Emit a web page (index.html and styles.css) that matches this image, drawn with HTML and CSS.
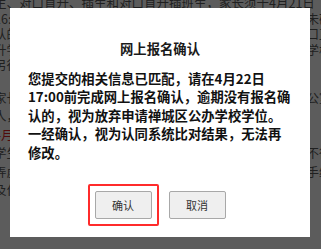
FILE: index.html
```html
<!DOCTYPE html>
<html lang="zh-CN">
<head>
<meta charset="utf-8">
<title>网上报名确认</title>
<link rel="stylesheet" href="styles.css">
</head>
<body>
<div class="page">
  <p class="p1">生、对口直升、插生和对口直升插班生，家长须于4月21日16:00-4月22日17:00前登录系统完成网上报名确认，逾期未确认的视为放弃报名回执。符合对口直升条件的学生，由对口直升学校统一安排入学的学位。对口直升学校的招生信息由学校另行公司拉取，请家长留意学校公布的相关项目。</p>
  <p class="p2">家长应认真核对信息，如有疑问请联系所属学校的招生办公室人，报名</p>
  <p class="p3"><span class="red">4月23日</span>前由学校公布审核结果。</p>
  <p class="p4">学生信息以系统比对结果为准，家长须按要求提交材料，不得弄虚作假，尚适用相关规定的学生，请按时到校办理入学手续及住宿、安排宿部相关事宜。</p>
</div>

<div class="overlay">
  <div class="modal">
    <h2 class="title">网上报名确认</h2>
    <p class="message">您提交的相关信息已匹配，请在4月22日17:00前完成网上报名确认，逾期没有报名确认的，视为放弃申请禅城区公办学校学位。一经确认，视为认同系统比对结果，无法再修改。</p>
    <div class="actions">
      <button class="btn btn-primary" type="button">确认</button>
      <button class="btn" type="button">取消</button>
    </div>
  </div>
</div>
</body>
</html>
```

FILE: styles.css
```css
html, body {
  margin: 0;
  padding: 0;
}

body {
  width: 321px;
  height: 249px;
  overflow: hidden;
  background: #ffffff;
  font-family: "Noto Sans CJK SC", "Microsoft YaHei", sans-serif;
}

.page {
  margin-left: -6px;
  margin-top: -5px;
  width: 340px;
  font-size: 12.5px;
  color: #5a5a5a;
}

.page p {
  margin: 0;
}

.p1 {
  line-height: 15.5px;
}

.p2 {
  margin-top: 16px !important;
  line-height: 18.5px;
}

.p3,
.p4 {
  line-height: 18.5px;
}

.red {
  color: #dd2222;
}

.overlay {
  position: fixed;
  inset: 0;
  background: rgba(0, 0, 0, 0.64);
}

.modal {
  position: absolute;
  left: 10px;
  top: 8px;
  width: 300px;
  height: 229px;
  box-sizing: border-box;
  padding: 32px 18px 0;
  background: #ffffff;
  display: flex;
  flex-direction: column;
}

.title {
  margin: 0;
  font-size: 13.33px;
  line-height: 18.6px;
  font-weight: bold;
  text-align: center;
  color: #1a1a1a;
}

.message {
  margin: 11px 0 0;
  font-size: 13.33px;
  line-height: 18.5px;
  font-weight: bold;
  color: #111111;
}

.actions {
  margin-top: 29px;
  display: flex;
  justify-content: center;
  gap: 17px;
}

.btn {
  position: relative;
  width: 57px;
  height: 28px;
  box-sizing: border-box;
  border: 1px solid #a8a8a8;
  border-radius: 2px;
  background: #efefef;
  font-family: "Noto Sans CJK SC", sans-serif;
  font-size: 11px;
  color: #333333;
  padding: 0;
}

.btn-primary::after {
  content: "";
  position: absolute;
  inset: -8px;
  border: 2px solid #ff2b2b;
  border-radius: 2px;
  pointer-events: none;
}
```
